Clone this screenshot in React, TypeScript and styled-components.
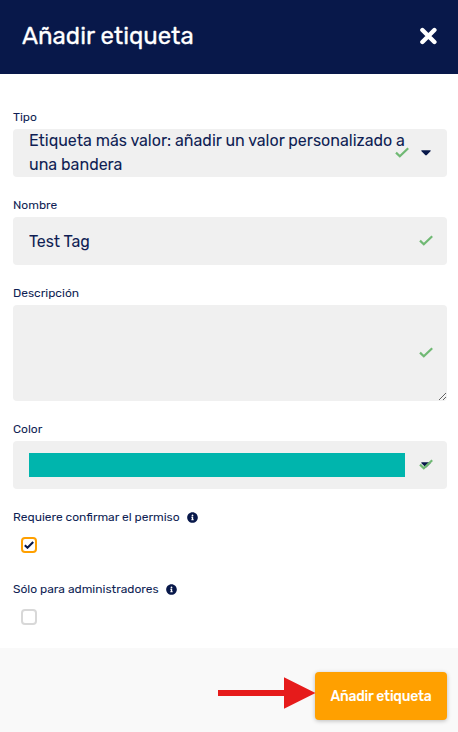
import React from "react";
import styled, { createGlobalStyle } from "styled-components";
import { FaInfoCircle } from "react-icons/fa";

const navy = "#08184a";
const ink = "#0f1e54";

const GlobalStyle = createGlobalStyle`
  *, *::before, *::after { box-sizing: border-box; }
  body {
    margin: 0;
    background: #fff;
    color: ${ink};
    font-family: Rubik, Roboto, sans-serif;
    font-size: 16px;
    line-height: 24px;
  }
`;

const Dialog = styled.div`
  display: flex;
  flex-direction: column;
  min-height: 732px;
`;

const Header = styled.header`
  display: flex;
  align-items: center;
  justify-content: space-between;
  height: 74px;
  padding: 0 20px 2px 22px;
  background: ${navy};
  color: #fff;
`;

const Text = styled.span`
  white-space: nowrap;
`;

const Title = styled.h1`
  margin: 0;
  font-size: 24px;
  font-weight: 400;
  line-height: 32px;
  -webkit-text-stroke: 0.3px #fff;
`;

const CloseButton = styled.button`
  display: flex;
  padding: 0;
  border: 0;
  background: none;
  color: #fff;
`;

const Form = styled.form`
  display: flex;
  flex-direction: column;
  flex: 1;
  gap: 16px;
  padding: 31px 11px 15px 13px;
`;

const Field = styled.div`
  display: flex;
  flex-direction: column;
`;

const Label = styled.label`
  display: flex;
  align-items: center;
  gap: 7px;
  height: 24px;
  font-size: 12px;
`;

const Control = styled.div<{ $end?: number }>`
  position: relative;
  display: flex;
  align-items: center;
  height: 48px;
  padding: 0 ${(p) => p.$end ?? 16}px 0 16px;
  border-radius: 4px;
  background: #f0f0f0;
`;

const Lines = styled.div`
  display: flex;
  flex-direction: column;
  flex: 1;
`;

const Input = styled.input`
  flex: 1;
  min-width: 0;
  padding: 2px 0 0;
  border: 0;
  outline: 0;
  background: none;
  color: inherit;
  font: inherit;
`;

const AreaWrap = styled.div`
  position: relative;
  display: flex;
  height: 96px;
`;

const Area = styled.textarea`
  width: 100%;
  height: 96px;
  padding: 12px 16px;
  border: 0;
  border-radius: 4px;
  outline: 0;
  background: #f0f0f0;
  resize: vertical;
`;

const Swatch = styled.div`
  flex: 1;
  height: 24px;
  background: #00b5ad;
`;

const Adornment = styled.span<{ $right: number }>`
  position: absolute;
  top: 0;
  bottom: 0;
  right: ${(p) => p.$right}px;
  display: flex;
  align-items: center;
  pointer-events: none;
`;

const CheckRow = styled.div`
  display: flex;
  align-items: center;
  height: 32px;
  padding-left: 8px;
`;

const Box = styled.span<{ $on?: boolean }>`
  display: flex;
  align-items: center;
  justify-content: center;
  width: 16px;
  height: 16px;
  border: 2px solid ${(p) => (p.$on ? "#ffa000" : "#d8d8d8")};
  border-radius: 4px;
  background: #fff;
`;

const Footer = styled.footer`
  position: relative;
  display: flex;
  justify-content: flex-end;
  height: 84px;
  padding: 24px 11px 12px;
  background: #f9f9f9;
`;

const Submit = styled.button`
  display: flex;
  align-items: center;
  justify-content: center;
  width: 132px;
  height: 48px;
  padding: 1px 0 0;
  border: 0;
  border-radius: 4px;
  background: #ffa000;
  box-shadow: 0 1px 4px rgba(0, 0, 0, 0.25);
  color: #fff;
  font: 500 14px/24px Rubik, Roboto, sans-serif;
  letter-spacing: -0.23px;
`;

const Pointer = styled.svg`
  position: absolute;
  left: 218px;
  top: 29px;
`;

const Tick = () => (
  <svg width="14" height="12" viewBox="0 0 14 12" fill="none">
    <path d="M1 5.6 4.8 9.2 13.2 1.2" stroke="#70b974" strokeWidth="2.2" />
  </svg>
);

const Caret = () => (
  <svg width="10" height="6" viewBox="0 0 10 6">
    <path d="M.8.3h8.4q1 .2.3 1L5.8 5q-.8.8-1.6 0L.5 1.3Q-.2.5.8.3Z" fill={navy} />
  </svg>
);

export default function App() {
  return (
    <>
      <GlobalStyle />
      <Dialog>
        <Header>
          <Title>Añadir etiqueta</Title>
          <CloseButton aria-label="Cerrar">
            <svg width="20" height="18" viewBox="0 0 20 18">
              <path d="M4.4 3 16.4 15M16.4 3 4.4 15" stroke="#fff" strokeWidth="4.4" strokeLinecap="round" />
            </svg>
          </CloseButton>
        </Header>
        <Form>
          <Field>
            <Label>Tipo</Label>
            <Control $end={42}>
              <Lines>
                <Text>Etiqueta más valor: añadir un valor personalizado a</Text>
                <Text>una bandera</Text>
              </Lines>
              <Adornment $right={38}><Tick /></Adornment>
              <Adornment $right={16}><Caret /></Adornment>
            </Control>
          </Field>
          <Field>
            <Label>Nombre</Label>
            <Control>
              <Input defaultValue="Test Tag" />
              <Adornment $right={14}><Tick /></Adornment>
            </Control>
          </Field>
          <Field>
            <Label>Descripción</Label>
            <AreaWrap>
              <Area />
              <Adornment $right={14}><Tick /></Adornment>
            </AreaWrap>
          </Field>
          <Field>
            <Label>Color</Label>
            <Control $end={42}>
              <Swatch />
              <Adornment $right={16}><Caret /></Adornment>
              <Adornment $right={14}><Tick /></Adornment>
            </Control>
          </Field>
          <Field>
            <Label>
              <Text>Requiere confirmar el permiso</Text>
              <FaInfoCircle size={11} color={navy} />
            </Label>
            <CheckRow>
              <Box $on>
                <svg width="10" height="8" viewBox="0 0 10 8" fill="none">
                  <path d="M.8 4.2 3.5 6.7 9.2 1" stroke={navy} strokeWidth="2.1" />
                </svg>
              </Box>
            </CheckRow>
          </Field>
          <Field>
            <Label>
              <Text>Sólo para administradores</Text>
              <FaInfoCircle size={11} color={navy} />
            </Label>
            <CheckRow><Box /></CheckRow>
          </Field>
        </Form>
        <Footer>
          <Pointer width="98" height="33" viewBox="0 0 98 33">
            <path d="M0 13h66V.3L97.5 16 66 31.8V19H0Z" fill="#e61b1b" />
          </Pointer>
          <Submit type="button">Añadir etiqueta</Submit>
        </Footer>
      </Dialog>
    </>
  );
}
